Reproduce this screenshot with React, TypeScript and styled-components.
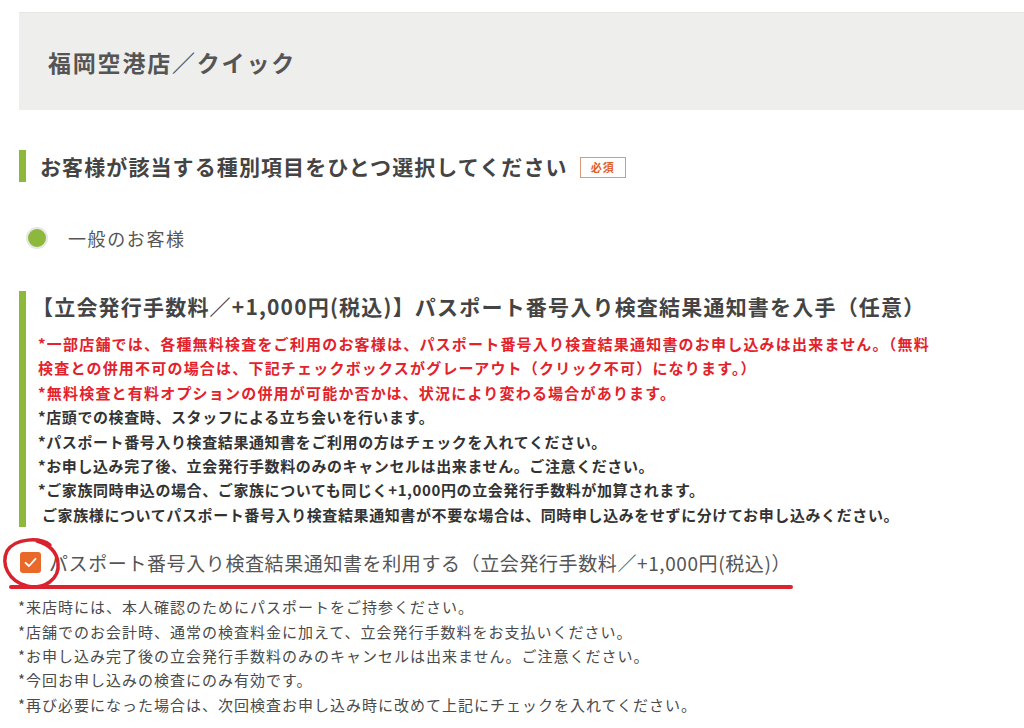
import * as React from 'react';
import styled, { createGlobalStyle } from 'styled-components';

const GlobalStyle = createGlobalStyle`
  body {
    margin: 0;
    background: #fff;
    font-family: "Noto Sans CJK JP", "Noto Sans", sans-serif;
    color: #444;
  }
`;

const Page = styled.div`
  padding: 12px 0 0 19px;
  width: 1005px;
  height: 716px;
  overflow: hidden;
`;

const StoreHeader = styled.div`
  display: flex;
  align-items: center;
  height: 98px;
  padding-left: 29px;
  background: #eeeeec;
  border-top: 1px solid #e6e6e2;
  box-sizing: border-box;
  font-size: 23px;
  font-weight: 700;
  letter-spacing: 1.8px;
  color: #555;
`;

const SectionTitle = styled.div`
  display: flex;
  align-items: center;
  gap: 12px;
  height: 32px;
  margin-top: 40px;
  padding-left: 14px;
  border-left: 7px solid #8cb83c;
  font-size: 21px;
  font-weight: 700;
  letter-spacing: 1.1px;
  color: #444;
`;

const Required = styled.span`
  display: inline-flex;
  align-items: center;
  justify-content: center;
  width: 46px;
  height: 21px;
  box-sizing: border-box;
  border: 1px solid #d9987a;
  font-size: 11px;
  font-weight: 700;
  letter-spacing: 1px;
  color: #e0602a;
  margin-top: 2px;
`;

const RadioRow = styled.label`
  display: flex;
  align-items: center;
  gap: 20px;
  margin-top: 45px;
  padding-left: 7px;
  height: 22px;
  font-size: 18px;
  letter-spacing: 1.6px;
  color: #555;
`;

const RadioDot = styled.span`
  width: 22px;
  height: 22px;
  box-sizing: border-box;
  border-radius: 50%;
  border: 2px solid #e6e6e6;
  background: #8cb83c;
`;

const OptionBlock = styled.div`
  margin-top: 42px;
  padding: 0 0 0 12px;
  border-left: 7px solid #8cb83c;
`;

const OptionTitle = styled.div`
  margin-left: -6px;
  font-size: 21px;
  font-weight: 700;
  letter-spacing: 1.2px;
  line-height: 30px;
  color: #444;
`;

const Notes = styled.div<{ $tone: 'alert' | 'info' | 'plain' }>`
  margin-top: ${p => (p.$tone === 'alert' ? '11px' : '0')};
  font-size: 15px;
  line-height: 24.4px;
  white-space: nowrap;
  font-weight: ${p => (p.$tone === 'plain' ? 400 : 700)};
  letter-spacing: ${p => (p.$tone === 'alert' ? '1.2px' : p.$tone === 'info' ? '0.6px' : '1px')};
  color: ${p => (p.$tone === 'alert' ? '#e3222b' : p.$tone === 'info' ? '#333' : '#4a4a4a')};
`;

const CheckRow = styled.label`
  position: relative;
  display: flex;
  align-items: center;
  gap: 8px;
  height: 30px;
  margin-top: 20px;
  padding-left: 1px;
  font-size: 19px;
  letter-spacing: 0.6px;
  color: #555;
`;

const CheckBox = styled.span`
  display: inline-flex;
  align-items: center;
  justify-content: center;
  width: 21px;
  height: 21px;
  border-radius: 3px;
  background: #e9692a;
`;

const Annotation = styled.svg`
  position: absolute;
  left: -19px;
  top: -12px;
  pointer-events: none;
`;

const FootNotes = styled(Notes)`
  margin-top: 18px;
  margin-left: -1px;
`;

const App = () => (
  <>
    <GlobalStyle />
    <Page>
      <StoreHeader>福岡空港店／クイック</StoreHeader>

      <SectionTitle>
        お客様が該当する種別項目をひとつ選択してください
        <Required>必須</Required>
      </SectionTitle>

      <RadioRow>
        <RadioDot />
        一般のお客様
      </RadioRow>

      <OptionBlock>
        <OptionTitle>【立会発行手数料／+1,000円(税込)】パスポート番号入り検査結果通知書を入手（任意）</OptionTitle>
        <Notes $tone="alert">
          *一部店舗では、各種無料検査をご利用のお客様は、パスポート番号入り検査結果通知書のお申し込みは出来ません。（無料
          <br />
          検査との併用不可の場合は、下記チェックボックスがグレーアウト（クリック不可）になります。）
          <br />
          *無料検査と有料オプションの併用が可能か否かは、状況により変わる場合があります。
        </Notes>
        <Notes $tone="info">
          *店頭での検査時、スタッフによる立ち会いを行います。
          <br />
          *パスポート番号入り検査結果通知書をご利用の方はチェックを入れてください。
          <br />
          *お申し込み完了後、立会発行手数料のみのキャンセルは出来ません。ご注意ください。
          <br />
          *ご家族同時申込の場合、ご家族についても同じく+1,000円の立会発行手数料が加算されます。
          <br />
          &nbsp;ご家族様についてパスポート番号入り検査結果通知書が不要な場合は、同時申し込みをせずに分けてお申し込みください。
        </Notes>
      </OptionBlock>

      <CheckRow>
        <CheckBox>
          <svg width="13" height="11" viewBox="0 0 13 11">
            <path d="M1.5 5.8 L5 9 L11.5 1.8" fill="none" stroke="#fff" strokeWidth="1.8" strokeLinecap="round" strokeLinejoin="round" />
          </svg>
        </CheckBox>
        パスポート番号入り検査結果通知書を利用する（立会発行手数料／+1,000円(税込)）
        <Annotation width="820" height="60" viewBox="0 0 820 60">
          <path
            d="M50 10 C40 2, 15 3, 7 16 C1 29, 8 46, 27 51 C44 55, 60 44, 58 28 C57 18, 51 10, 37 6"
            fill="none"
            stroke="#d7232e"
            strokeWidth="3.5"
            strokeLinecap="round"
          />
          <path d="M11 52 L791 52" stroke="#dc2430" strokeWidth="4" strokeLinecap="round" />
        </Annotation>
      </CheckRow>

      <FootNotes $tone="plain">
        *来店時には、本人確認のためにパスポートをご持参ください。
        <br />
        *店舗でのお会計時、通常の検査料金に加えて、立会発行手数料をお支払いください。
        <br />
        *お申し込み完了後の立会発行手数料のみのキャンセルは出来ません。ご注意ください。
        <br />
        *今回お申し込みの検査にのみ有効です。
        <br />
        *再び必要になった場合は、次回検査お申し込み時に改めて上記にチェックを入れてください。
      </FootNotes>
    </Page>
  </>
);

export default App;
